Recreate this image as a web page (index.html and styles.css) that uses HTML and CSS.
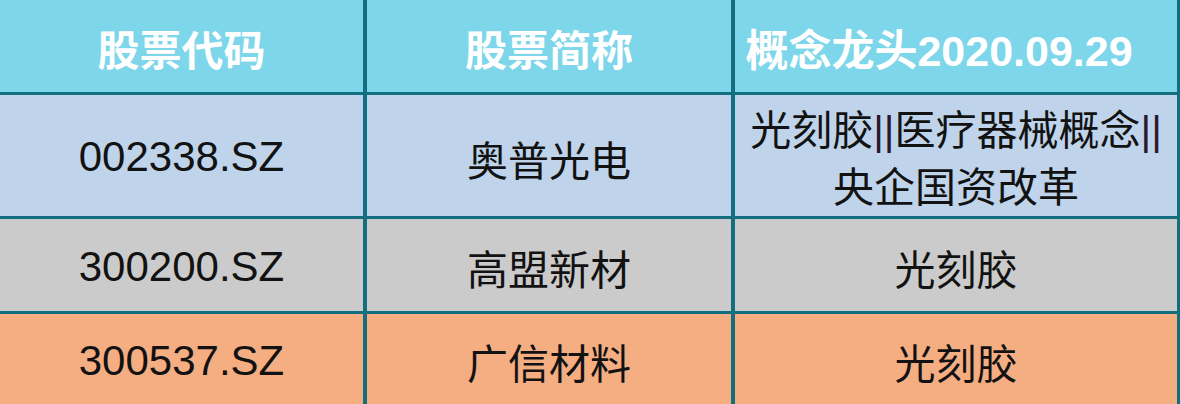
FILE: index.html
```html
<!DOCTYPE html>
<html lang="zh-CN">
<head>
<meta charset="utf-8">
<title>概念龙头</title>
<link rel="stylesheet" href="styles.css">
</head>
<body>
<div class="table">
  <div class="cell head">股票代码</div>
  <div class="cell head">股票简称</div>
  <div class="cell head head-date">概念龙头2020.09.29</div>

  <div class="cell r1 code">002338.SZ</div>
  <div class="cell r1 cn">奥普光电</div>
  <div class="cell r1 cn multi"><span class="lines">光刻胶<span class="pipe">||</span>医疗器械概念<span class="pipe">||</span><br>央企国资改革</span></div>

  <div class="cell r2 code">300200.SZ</div>
  <div class="cell r2 cn">高盟新材</div>
  <div class="cell r2 cn">光刻胶</div>

  <div class="cell r3 code">300537.SZ</div>
  <div class="cell r3 cn">广信材料</div>
  <div class="cell r3 cn">光刻胶</div>
</div>
</body>
</html>
```
FILE: styles.css
```css
html, body {
  margin: 0;
  padding: 0;
  background: #ffffff;
}

.table {
  width: 1180px;
  height: 404px;
  box-sizing: border-box;
  padding-right: 3px;
  display: grid;
  grid-template-columns: 363px 364px 442px;
  grid-template-rows: 92px 121px 92px 90px;
  column-gap: 4px;
  row-gap: 3px;
  background: #136e80;
  overflow: hidden;
}

.cell {
  display: flex;
  align-items: center;
  justify-content: center;
  text-align: center;
  font-family: "Liberation Sans", "Noto Sans CJK SC", sans-serif;
  color: #121212;
  white-space: nowrap;
}

.head {
  background: #7ed6ea;
  color: #ffffff;
  font-weight: bold;
  font-size: 42px;
  padding-top: 2px;
  box-sizing: border-box;
}

.head-date {
  font-size: 43px;
  padding-right: 34px;
}

.r1 { background: #bfd4ea; }
.r2 { background: #cccbcb; }
.r3 { background: #f5ad82; }

.code {
  font-size: 42px;
  padding-top: 3px;
  box-sizing: border-box;
}

.cn {
  font-size: 41px;
  padding-top: 4px;
  box-sizing: border-box;
}

.multi {
  font-size: 41px;
  line-height: 57px;
  padding-top: 8px;
}

.lines {
  display: block;
}

.pipe {
  color: #2b1830;
}
```
